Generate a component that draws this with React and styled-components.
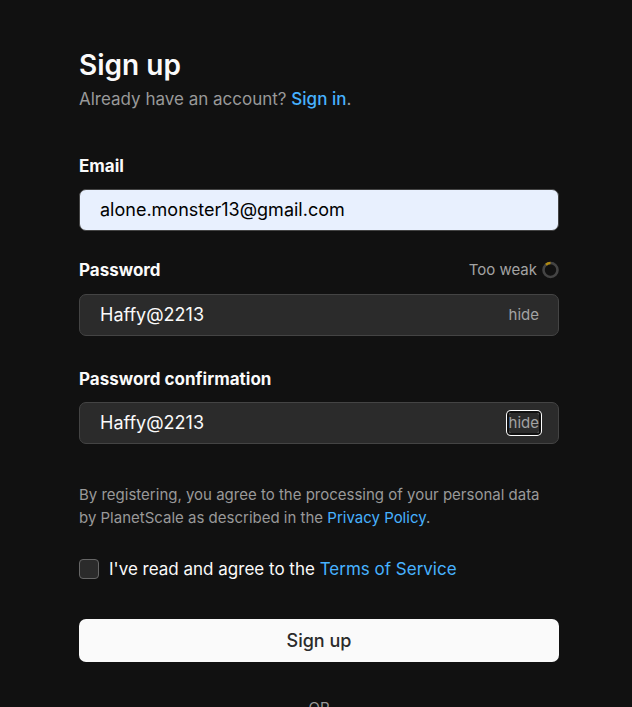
import React, { useState } from "react";
import styled, { createGlobalStyle } from "styled-components";

const GlobalStyle = createGlobalStyle`
  * { box-sizing: border-box; }
  html { background: #111111; scrollbar-width: none; }
  body {
    margin: 0;
    background: #111111;
    color: #fafafa;
    font-family: Inter, "Liberation Sans", sans-serif;
    font-size: 17px;
    line-height: 24px;
  }
`;

const Page = styled.main`
  padding: 48px 73px 24px 79px;
`;

const Header = styled.header`
  margin-bottom: 43px;
`;

const Title = styled.h1`
  margin: 0 0 5px;
  font-size: 28px;
  line-height: 34px;
  font-weight: 600;
`;

const Subtitle = styled.p`
  margin: 0;
  color: #999999;
`;

const Link = styled.a`
  color: #47b2ff;
  text-decoration: none;
  font-weight: ${(p) => (p.$strong ? 500 : 400)};
`;

const Form = styled.form`
  display: flex;
  flex-direction: column;
`;

const Field = styled.div`
  display: flex;
  flex-direction: column;
  gap: ${(p) => p.$inner}px;
  margin-bottom: ${(p) => p.$gap}px;
`;

const FieldHead = styled.div`
  display: flex;
  align-items: center;
  justify-content: space-between;
`;

const Label = styled.label`
  font-weight: 700;
`;

const Strength = styled.span`
  display: flex;
  align-items: center;
  gap: 4px;
  color: #a3a3a3;
  font-size: 15px;
`;

const InputFrame = styled.div`
  display: flex;
  align-items: center;
  height: 42px;
  padding: 0 19px 0 20px;
  border: 1px solid #444444;
  border-radius: 7px;
  background: ${(p) => (p.$filled ? "#e8f0fe" : "#2b2b2b")};
  color: ${(p) => (p.$filled ? "#000000" : "#fafafa")};
`;

const Input = styled.input`
  flex: 1;
  min-width: 0;
  padding: 0;
  border: 0;
  outline: 0;
  background: transparent;
  color: inherit;
  font: inherit;
  font-size: 18px;
`;

const Toggle = styled.button`
  padding: 0;
  border: 0;
  border-radius: 2px;
  background: transparent;
  color: #a3a3a3;
  font: inherit;
  font-size: 15px;
  line-height: 20px;
  cursor: pointer;
  outline: none;
  box-shadow: ${(p) => (p.$focused ? "0 0 0 2px #111111, 0 0 0 3px #ffffff" : "none")};
`;

const Notice = styled.p`
  margin: 0 0 28px;
  color: #999999;
  font-size: 15px;
  line-height: 23px;
`;

const Agreement = styled.div`
  display: flex;
  align-items: center;
  gap: 10px;
  margin-bottom: 38px;
`;

const Checkbox = styled.input`
  appearance: none;
  flex: none;
  width: 20px;
  height: 20px;
  margin: 0;
  border: 1px solid #666666;
  border-radius: 4px;
  background: #2b2b2b;

  &:checked {
    background: #47b2ff;
  }
`;

const Submit = styled.button`
  height: 43px;
  padding: 0;
  border: 0;
  border-radius: 7px;
  background: #fafafa;
  color: #2b2b2b;
  font: inherit;
  font-size: 18px;
  font-weight: 500;
  cursor: pointer;
`;

const Divider = styled.p`
  margin: 34px 0 0;
  color: #999999;
  font-size: 15px;
  text-align: center;
`;

function StrengthRing() {
  return (
    <svg width="18" height="18" viewBox="0 0 18 18" fill="none" aria-hidden="true">
      <circle cx="9.5" cy="9" r="7" stroke="#444444" strokeWidth="2.6" />
      <path d="M5 3.64A7 7 0 0 1 9.5 2" stroke="#b08a12" strokeWidth="2.6" />
    </svg>
  );
}

function PasswordField({ id, label, inner, gap, status, focused }) {
  const [shown, setShown] = useState(true);
  return (
    <Field $inner={inner} $gap={gap}>
      <FieldHead>
        <Label htmlFor={id}>{label}</Label>
        {status}
      </FieldHead>
      <InputFrame>
        <Input id={id} type={shown ? "text" : "password"} defaultValue="Haffy@2213" spellCheck={false} />
        <Toggle type="button" $focused={focused} onClick={() => setShown(!shown)}>
          {shown ? "hide" : "show"}
        </Toggle>
      </InputFrame>
    </Field>
  );
}

export default function App() {
  return (
    <>
      <GlobalStyle />
      <Page>
        <Header>
          <Title>Sign up</Title>
          <Subtitle>
            Already have an account? <Link href="#signin" $strong>Sign in</Link>.
          </Subtitle>
        </Header>
        <Form onSubmit={(e) => e.preventDefault()}>
          <Field $inner={11} $gap={27}>
            <Label htmlFor="email">Email</Label>
            <InputFrame $filled>
              <Input id="email" type="email" defaultValue="alone.monster13@gmail.com" />
            </InputFrame>
          </Field>
          <PasswordField
            id="password"
            label="Password"
            inner={12}
            gap={31}
            status={<Strength>Too weak <StrengthRing /></Strength>}
          />
          <PasswordField id="confirmation" label="Password confirmation" inner={11} gap={39} focused />
          <Notice>
            By registering, you agree to the processing of your personal data by PlanetScale as
            described in the <Link href="#privacy">Privacy Policy</Link>.
          </Notice>
          <Agreement>
            <Checkbox id="terms" type="checkbox" />
            <label htmlFor="terms">
              I've read and agree to the <Link href="#terms">Terms of Service</Link>
            </label>
          </Agreement>
          <Submit type="submit">Sign up</Submit>
        </Form>
        <Divider>OR</Divider>
      </Page>
    </>
  );
}
